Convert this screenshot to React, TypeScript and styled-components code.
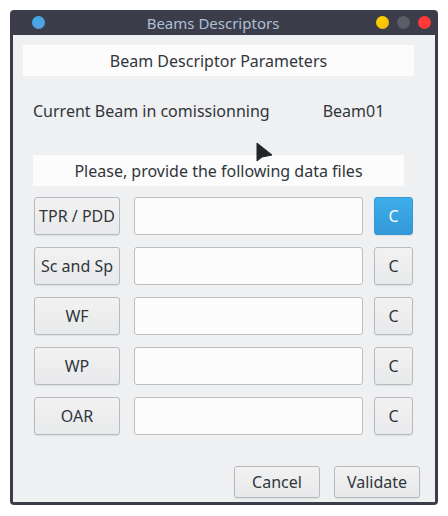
import React from "react"
import styled, { createGlobalStyle } from "styled-components"

const Global = createGlobalStyle`
  html, body {
    margin: 0;
    background: #ffffff;
    font-family: "Noto Sans", "Open Sans", sans-serif;
    color: #31363b;
  }
`

const Window = styled.div`
  position: relative;
  margin: 10px 0 0 10px;
  width: 428px;
  height: 495px;
  box-sizing: border-box;
  background: #3b3e4a;
  border-radius: 4px;
  display: flex;
  flex-direction: column;
  padding: 0 3px 3px 3px;
`

const TitleBar = styled.div`
  height: 25px;
  display: flex;
  align-items: center;
  position: relative;
  padding: 0 4px 0 19px;
`

const Title = styled.div`
  position: absolute;
  left: 0;
  right: 22px;
  top: 0;
  line-height: 26px;
  text-align: center;
  font-size: 15px;
  color: #b0bed4;
`

const Dot = styled.span<{ $c: string }>`
  width: 13px;
  height: 13px;
  border-radius: 50%;
  background: ${(p) => p.$c};
  flex: none;
`

const Spacer = styled.div`
  flex: 1;
`

const Dots = styled.div`
  display: flex;
  gap: 8px;
  position: relative;
`

const Body = styled.div`
  flex: 1;
  background: #eff0f1;
  display: flex;
  flex-direction: column;
  padding: 10px 0 0 0;
`

const Banner = styled.div<{ $l: number; $w: number }>`
  margin-left: ${(p) => p.$l}px;
  width: ${(p) => p.$w}px;
  height: 31px;
  background: #fcfcfc;
  display: flex;
  align-items: center;
  justify-content: center;
  font-size: 16px;
`

const Current = styled.div`
  margin: 25px 0 0 20px;
  height: 20px;
  display: flex;
  align-items: center;
  font-size: 16px;
`

const Value = styled.span`
  margin-left: 53px;
`

const Rows = styled.div`
  margin: 11px 0 0 21px;
  display: flex;
  flex-direction: column;
  gap: 12px;
`

const Row = styled.div`
  display: flex;
  align-items: center;
  height: 38px;
`

const Button = styled.button<{ $w: number; $h?: number; $active?: boolean }>`
  width: ${(p) => p.$w}px;
  height: ${(p) => p.$h ?? 38}px;
  box-sizing: border-box;
  border: 1px solid ${(p) => (p.$active ? "#3498d8" : "#b8babd")};
  border-radius: 3px;
  background: ${(p) =>
    p.$active
      ? "linear-gradient(#3daee9, #3498d8)"
      : "linear-gradient(#f2f2f3, #e8e9ea)"};
  color: ${(p) => (p.$active ? "#fcfcfc" : "#31363b")};
  font-family: "Noto Sans", sans-serif;
  font-size: 16px;
  padding: 0;
  box-shadow: 0 1px 1px rgba(0, 0, 0, 0.08);
`

const Field = styled.div`
  width: 229px;
  height: 38px;
  box-sizing: border-box;
  margin: 0 11px 0 14px;
  background: #fcfcfc;
  border: 1px solid #bcbebf;
  border-radius: 3px;
`

const Footer = styled.div`
  margin: 31px 0 0 221px;
  display: flex;
  gap: 14px;
`

const Cursor = styled.svg`
  position: absolute;
  left: 246px;
  top: 131px;
`

const rows = ["TPR / PDD", "Sc and Sp", "WF", "WP", "OAR"]

export default function App() {
  return (
    <>
      <Global />
      <Window>
        <TitleBar>
          <Title>Beams Descriptors</Title>
          <Dot $c="linear-gradient(135deg, #3daee9, #5b9be0)" />
          <Spacer />
          <Dots>
            <Dot $c="linear-gradient(135deg, #ffd800, #f5b800)" />
            <Dot $c="#5a5c66" />
            <Dot $c="#ff3838" />
          </Dots>
        </TitleBar>
        <Body>
          <Banner $l={10} $w={391}>Beam Descriptor Parameters</Banner>
          <Current>
            Current Beam in comissionning
            <Value>Beam01</Value>
          </Current>
          <Banner $l={20} $w={371} style={{ marginTop: 34 }}>
            Please, provide the following data files
          </Banner>
          <Rows>
            {rows.map((r, i) => (
              <Row key={r}>
                <Button $w={86}>{r}</Button>
                <Field />
                <Button $w={39} $active={i === 0}>C</Button>
              </Row>
            ))}
          </Rows>
          <Footer>
            <Button $w={86} $h={32}>Cancel</Button>
            <Button $w={86} $h={32}>Validate</Button>
          </Footer>
        </Body>
        <Cursor width="20" height="24" viewBox="0 0 20 24">
          <path d="M1 2 L1 20 L6 16 L16 14 Z" fill="#232629" stroke="#232629" strokeWidth="1" strokeLinejoin="round" />
        </Cursor>
      </Window>
    </>
  )
}
